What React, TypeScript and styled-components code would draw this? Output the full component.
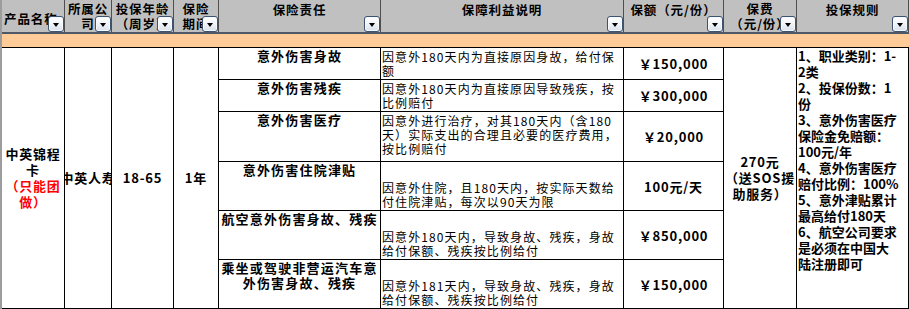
import React from 'react';
import styled, { createGlobalStyle } from 'styled-components';

const GlobalStyle = createGlobalStyle`
  html, body { margin: 0; padding: 0; background: #ffffff; }
  body {
    font-family: "Noto Sans CJK SC", "Noto Sans", sans-serif;
    color: #000;
  }
  #root { width: 909px; height: 309px; }
`;

const COLS = '62px 46px 61px 44px 161px 242px 99px 72px 111px';

const Sheet = styled.div`
  width: 909px;
  height: 309px;
  box-sizing: border-box;
  border-left: 2px solid #9c9c9c;
  display: flex;
  flex-direction: column;
  overflow: hidden;
`;

const HeaderRow = styled.div`
  display: grid;
  grid-template-columns: ${COLS};
  column-gap: 1px;
  height: 32px;
  padding-right: 1px;
  background: #4f4f4f;
  border-bottom: 2px solid #4e5866;
  flex-shrink: 0;
`;

const HeadCell = styled.div<{ $pt: number; $left?: boolean }>`
  position: relative;
  background: #c0c0c0;
  padding-top: ${(p) => p.$pt}px;
  padding-left: ${(p) => (p.$left ? 2 : 0)}px;
  box-sizing: border-box;
  text-align: ${(p) => (p.$left ? 'left' : 'center')};
  font-size: 12.5px;
  font-weight: 700;
  letter-spacing: 0.9px;
  line-height: 15px;
  white-space: nowrap;
  overflow: hidden;
`;

const Line = styled.span`
  display: block;
  white-space: nowrap;
`;

const DropButton = styled.span`
  position: absolute;
  right: 0;
  bottom: 0;
  width: 16px;
  height: 16px;
  box-sizing: border-box;
  border: 1px solid #3c5472;
  border-radius: 3px;
  background: linear-gradient(180deg, #ffffff 0%, #eef2f7 55%, #d8e0ea 100%);
  box-shadow: inset 0 0 0 1px #f7f9fc;
  display: flex;
  align-items: center;
  justify-content: center;

  &::after {
    content: '';
    display: block;
    margin-top: 1px;
    width: 0;
    height: 0;
    border-left: 3.5px solid transparent;
    border-right: 3.5px solid transparent;
    border-top: 4px solid #000;
  }
`;

const Band = styled.div`
  height: 13px;
  background: #ffcc99;
  flex-shrink: 0;
`;

const Body = styled.div`
  display: grid;
  grid-template-columns: ${COLS};
  grid-template-rows: 31px 31px 49px 48px 48px 48px;
  gap: 1px;
  padding: 1px 1px 1px 0;
  background: #000;
  flex-shrink: 0;
`;

const Cell = styled.div`
  background: #fff;
  box-sizing: border-box;
  min-width: 0;
`;

const TallCell = styled(Cell)<{ $col: number; $clip?: boolean }>`
  grid-row: 1 / -1;
  grid-column: ${(p) => p.$col};
  display: flex;
  flex-direction: column;
  align-items: center;
  justify-content: center;
  text-align: center;
  font-size: 13px;
  font-weight: 700;
  letter-spacing: 0.8px;
  line-height: 16px;
  overflow: ${(p) => (p.$clip ? 'hidden' : 'visible')};
`;

const NoShrink = styled.span`
  flex-shrink: 0;
  white-space: nowrap;
`;

const RedLine = styled(Line)`
  color: #ff0000;
`;

const CoverageCell = styled(Cell)<{ $row: number }>`
  grid-column: 5;
  grid-row: ${(p) => p.$row};
  text-align: center;
  font-size: 13px;
  font-weight: 700;
  letter-spacing: 1.2px;
  line-height: 15px;
  padding-top: 0;
`;

const DescCell = styled(Cell)<{ $row: number; $bottom: boolean }>`
  grid-column: 6;
  grid-row: ${(p) => p.$row};
  display: flex;
  flex-direction: column;
  justify-content: ${(p) => (p.$bottom ? 'flex-end' : 'flex-start')};
  padding: ${(p) => (p.$bottom ? '0 0 1px 1px' : '2px 0 0 1px')};
  font-size: 12px;
  font-weight: 400;
  letter-spacing: 1.1px;
  line-height: 14px;
  overflow: hidden;
`;

const AmountCell = styled(Cell)<{ $row: number }>`
  grid-column: 7;
  grid-row: ${(p) => p.$row};
  display: flex;
  align-items: center;
  justify-content: center;
  font-size: 13px;
  font-weight: 700;
  letter-spacing: 0.8px;
`;

const RulesCell = styled(Cell)`
  grid-row: 1 / -1;
  grid-column: 9;
  padding: 0 0 0 1px;
  font-size: 13px;
  font-weight: 700;
  line-height: 16px;
`;

type Head = { lines: string[]; pt: number; left?: boolean };

const heads: Head[] = [
  { lines: ['产品名称'], pt: 11, left: true },
  { lines: ['所属公', '司'], pt: 1 },
  { lines: ['投保年龄', '（周岁）'], pt: 1 },
  { lines: ['保险', '期间'], pt: 1 },
  { lines: ['保险责任'], pt: 2 },
  { lines: ['保障利益说明'], pt: 2 },
  { lines: ['保额（元/份）'], pt: 2 },
  { lines: ['保费', '（元/份）'], pt: 1 },
  { lines: ['投保规则'], pt: 2 },
];

type Row = {
  coverage: string[];
  desc: string[];
  bottom: boolean;
  amount: string;
};

const rows: Row[] = [
  {
    coverage: ['意外伤害身故'],
    desc: ['因意外180天内为直接原因身故，给付保', '额'],
    bottom: false,
    amount: '￥150,000',
  },
  {
    coverage: ['意外伤害残疾'],
    desc: ['因意外180天内为直接原因导致残疾，按', '比例赔付'],
    bottom: false,
    amount: '￥300,000',
  },
  {
    coverage: ['意外伤害医疗'],
    desc: ['因意外进行治疗，对其180天内（含180', '天）实际支出的合理且必要的医疗费用，', '按比例赔付'],
    bottom: false,
    amount: '￥20,000',
  },
  {
    coverage: ['意外伤害住院津贴'],
    desc: ['因意外住院，且180天内，按实际天数给', '付住院津贴，每次以90天为限'],
    bottom: true,
    amount: '100元/天',
  },
  {
    coverage: ['航空意外伤害身故、残疾'],
    desc: ['因意外180天内，导致身故、残疾，身故', '给付保额、残疾按比例给付'],
    bottom: true,
    amount: '￥850,000',
  },
  {
    coverage: ['乘坐或驾驶非营运汽车意', '外伤害身故、残疾'],
    desc: ['因意外181天内，导致身故、残疾，身故', '给付保额、残疾按比例给付'],
    bottom: true,
    amount: '￥150,000',
  },
];

const rules = [
  '1、职业类别：1-',
  '2类',
  '2、投保份数：1',
  '份',
  '3、意外伤害医疗',
  '保险金免赔额：',
  '100元/年',
  '4、意外伤害医疗',
  '赔付比例：100%',
  '5、意外津贴累计',
  '最高给付180天',
  '6、航空公司要求',
  '是必须在中国大',
  '陆注册即可',
];

export default function App() {
  return (
    <>
      <GlobalStyle />
      <Sheet>
        <HeaderRow>
          {heads.map((h, i) => (
            <HeadCell key={i} $pt={h.pt} $left={h.left}>
              {h.lines.map((l, j) => (
                <Line key={j}>{l}</Line>
              ))}
              <DropButton />
            </HeadCell>
          ))}
        </HeaderRow>
        <Band />
        <Body>
          <TallCell $col={1}>
            <Line>中英锦程</Line>
            <Line>卡</Line>
            <RedLine>（只能团</RedLine>
            <RedLine>做）</RedLine>
          </TallCell>
          <TallCell $col={2} $clip>
            <NoShrink>中英人寿</NoShrink>
          </TallCell>
          <TallCell $col={3}>18-65</TallCell>
          <TallCell $col={4}>1年</TallCell>
          {rows.map((r, i) => (
            <React.Fragment key={i}>
              <CoverageCell $row={i + 1}>
                {r.coverage.map((l, j) => (
                  <Line key={j}>{l}</Line>
                ))}
              </CoverageCell>
              <DescCell $row={i + 1} $bottom={r.bottom}>
                {r.desc.map((l, j) => (
                  <Line key={j}>{l}</Line>
                ))}
              </DescCell>
              <AmountCell $row={i + 1}>{r.amount}</AmountCell>
            </React.Fragment>
          ))}
          <TallCell $col={8}>
            <Line>270元</Line>
            <Line>（送SOS援</Line>
            <Line>助服务）</Line>
          </TallCell>
          <RulesCell>
            {rules.map((l, j) => (
              <Line key={j}>{l}</Line>
            ))}
          </RulesCell>
        </Body>
      </Sheet>
    </>
  );
}
